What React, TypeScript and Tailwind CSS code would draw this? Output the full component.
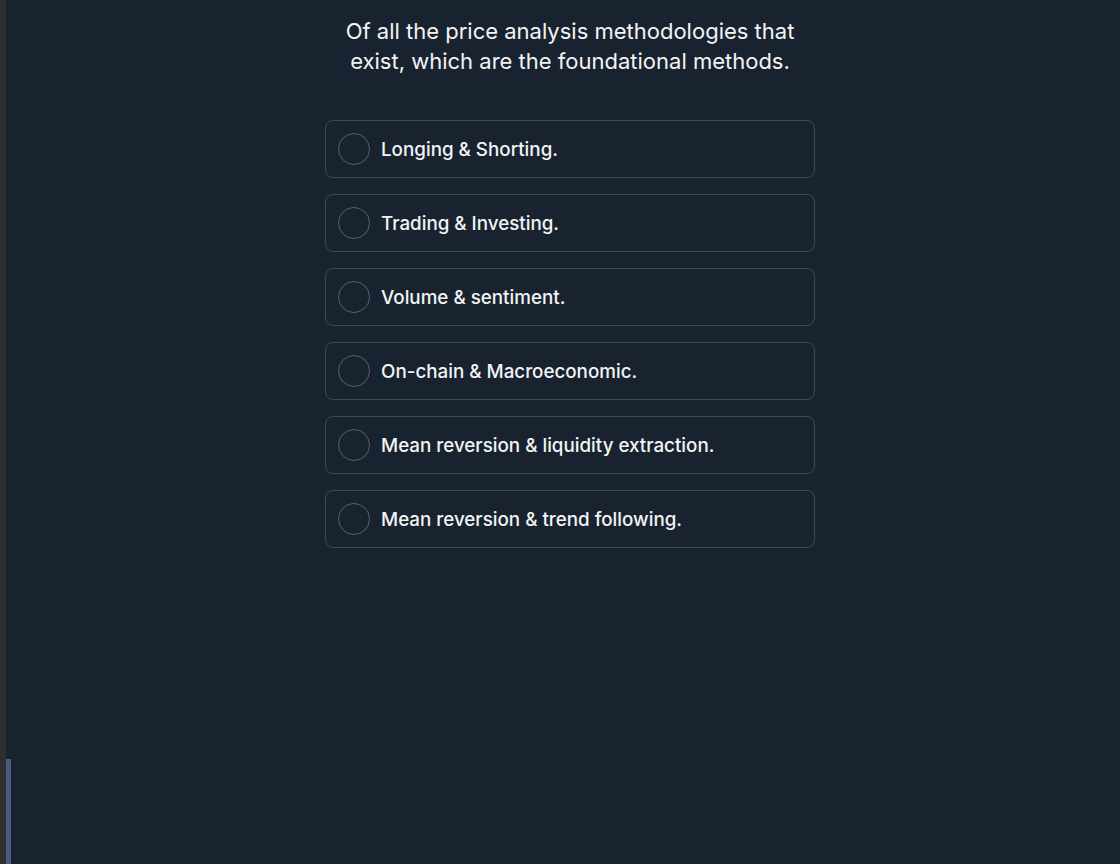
import React, { useState } from 'react';

const options = [
  'Longing & Shorting.',
  'Trading & Investing.',
  'Volume & sentiment.',
  'On-chain & Macroeconomic.',
  'Mean reversion & liquidity extraction.',
  'Mean reversion & trend following.',
];

const App = () => {
  const [selected, setSelected] = useState<number | null>(null);

  return (
    <div
      className="w-full h-screen flex bg-[#19232f] overflow-hidden"
      style={{ fontFamily: 'Inter, "Noto Sans", sans-serif' }}
    >
      <div className="w-[6px] h-full bg-[#2f2f30] shrink-0"></div>
      <div className="w-[5px] h-full flex flex-col justify-end shrink-0">
        <div className="w-full h-[105px] bg-[#4a5d7c]"></div>
      </div>
      <div className="flex-1 flex justify-center pl-[9px]">
        <div className="w-[490px] flex flex-col pt-4">
          <h1 className="text-[22px] leading-[30px] text-[#f2f4f6] text-center font-normal">
            Of all the price analysis methodologies that
            <br />
            exist, which are the foundational methods.
          </h1>
          <div className="mt-11 flex flex-col gap-4">
            {options.map((opt, i) => (
              <div
                key={i}
                onClick={() => setSelected(i)}
                className="h-[58px] flex items-center gap-[11px] px-3 border border-[#3e4957] rounded-lg cursor-pointer"
              >
                <div
                  className={`w-8 h-8 rounded-full border-[1.5px] shrink-0 ${
                    selected === i ? 'border-[#6b7c95] bg-[#4a5d7c]' : 'border-[#56616e]'
                  }`}
                ></div>
                <span className="pt-[2px] text-[18.8px] font-medium text-[#f2f4f6]">{opt}</span>
              </div>
            ))}
          </div>
        </div>
      </div>
    </div>
  );
};

export default App;
